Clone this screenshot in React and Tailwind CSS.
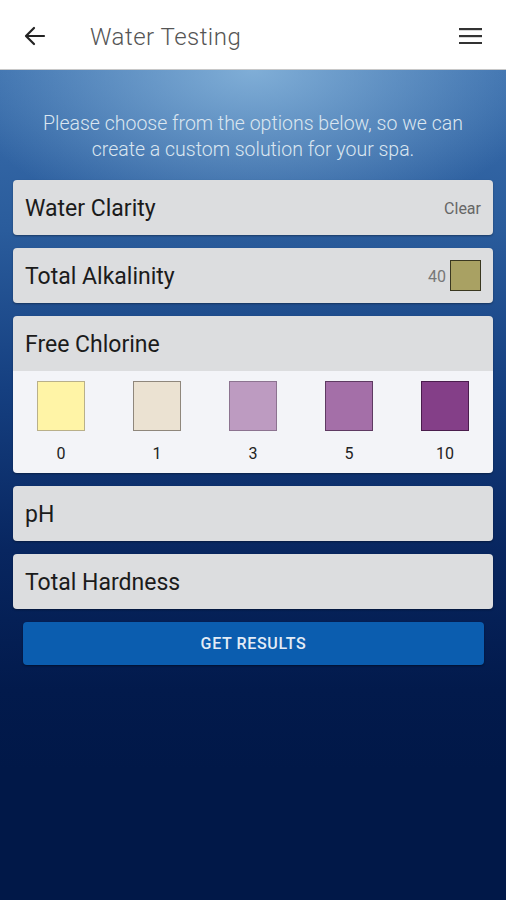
const swatches = [
  { label: "0", color: "bg-[#fff4a6]", border: "border-[#b9b08a]" },
  { label: "1", color: "bg-[#ebe2d2]", border: "border-[#8f877c]" },
  { label: "3", color: "bg-[#bd9bc1]", border: "border-[#8c7390]" },
  { label: "5", color: "bg-[#a46fa8]", border: "border-[#5e3a62]" },
  { label: "10", color: "bg-[#843f88]", border: "border-[#4a1d4d]" },
];

const Row = ({ label, children }) => (
  <div className="flex h-[55px] items-center justify-between rounded-[4px] bg-[#dcdddf] pl-3 pr-[12px] shadow-[0_1px_2px_rgba(0,0,0,0.35)]">
    <span className="pt-[4px] text-[23px] text-[#1b1b1b]">{label}</span>
    {children}
  </div>
);

export default function App() {
  return (
    <div className="min-h-[900px] font-['Roboto',sans-serif] bg-[#011848]">
      <header className="flex h-[70px] items-center border-b border-[#c8c8c8] bg-white px-[24px] pt-[2px]">
        <svg width="22" height="20" viewBox="0 0 22 20" fill="none" stroke="#222" strokeWidth="2.2" strokeLinecap="round" strokeLinejoin="round">
          <path d="M20 10H2.5M10 2L2 10l8 8" />
        </svg>
        <h1 className="ml-[44px] pt-[3px] text-[24px] font-light tracking-[0.02em] text-[#555]">Water Testing</h1>
        <svg className="ml-auto" width="23" height="16" viewBox="0 0 23 16" fill="#333">
          <rect x="0" y="0" width="23" height="2.2" />
          <rect x="0" y="7" width="23" height="2.2" />
          <rect x="0" y="14" width="23" height="2.2" />
        </svg>
      </header>

      <main className="min-h-[830px] bg-[image:radial-gradient(ellipse_300px_160px_at_50%_0%,rgba(140,185,222,0.85),rgba(140,185,222,0)),linear-gradient(to_bottom,#3a6eac_0px,#2a5c9c_160px,#153f80_320px,#082660_480px,#021a4c_620px,#011848_700px)] px-[13px] pb-10">
        <p className="pt-[41px] text-center text-[19.5px] font-light leading-[26px] text-[#dbe6f0]">
          Please choose from the options below, so we can
          <br />
          create a custom solution for your spa.
        </p>

        <div className="mt-[17px] flex flex-col gap-[13px]">
          <Row label="Water Clarity">
            <span className="pt-[3px] text-[16px] text-[#666]">Clear</span>
          </Row>
          <Row label="Total Alkalinity">
            <div className="flex items-center gap-[4px]">
              <span className="pt-[3px] text-[16px] text-[#777]">40</span>
              <span className="h-[31px] w-[31px] border border-[#3a3720] bg-[#a9a163]" />
            </div>
          </Row>

          <div className="overflow-hidden rounded-[4px] shadow-[0_1px_2px_rgba(0,0,0,0.35)]">
            <div className="flex h-[55px] items-center bg-[#dcdddf] pl-3">
              <span className="pt-[4px] text-[23px] text-[#1b1b1b]">Free Chlorine</span>
            </div>
            <div className="grid h-[102px] grid-cols-5 bg-[#f3f4f8] pt-[10px]">
              {swatches.map((s) => (
                <div key={s.label} className="flex flex-col items-center">
                  <span className={`h-[50px] w-[48px] border ${s.border} ${s.color}`} />
                  <span className="mt-[11px] text-[16px] text-[#222]">{s.label}</span>
                </div>
              ))}
            </div>
          </div>

          <Row label="pH" />
          <Row label="Total Hardness" />
        </div>

        <button
          type="button"
          className="mx-[10px] mt-[13px] flex h-[43px] w-[461px] items-center justify-center rounded-[4px] bg-[#0b5daf] text-[16px] font-medium tracking-[0.04em] text-[#e3ecf6] shadow-[0_1px_2px_rgba(0,0,0,0.4)]"
        >
          GET RESULTS
        </button>
      </main>
    </div>
  );
}
